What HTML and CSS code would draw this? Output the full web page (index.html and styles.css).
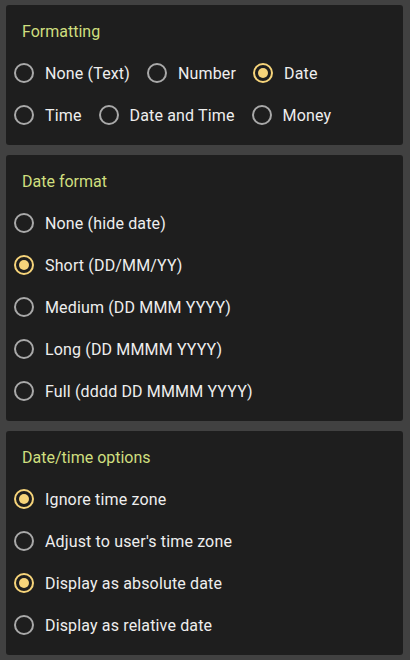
FILE: index.html
```html
<!DOCTYPE html>
<html lang="en">
<head>
    <meta charset="UTF-8">
    <meta name="viewport" content="width=device-width, initial-scale=1.0">
    <title>Date field settings</title>
    <link rel="stylesheet" href="styles.css">
</head>
<body>
    <!-- Formatting -->
    <div class="panel">
        <h2 class="panel-title">Formatting</h2>
        <div class="choice-row">
            <label class="choice"><span class="radio"></span>None (Text)</label>
            <label class="choice"><span class="radio"></span>Number</label>
            <label class="choice"><span class="radio checked"></span>Date</label>
        </div>
        <div class="choice-row">
            <label class="choice"><span class="radio"></span>Time</label>
            <label class="choice"><span class="radio"></span>Date and Time</label>
            <label class="choice"><span class="radio"></span>Money</label>
        </div>
    </div>

    <!-- Date format -->
    <div class="panel">
        <h2 class="panel-title">Date format</h2>
        <label class="choice"><span class="radio"></span>None (hide date)</label>
        <label class="choice"><span class="radio checked"></span>Short (DD/MM/YY)</label>
        <label class="choice"><span class="radio"></span>Medium (DD MMM YYYY)</label>
        <label class="choice"><span class="radio"></span>Long (DD MMMM YYYY)</label>
        <label class="choice"><span class="radio"></span>Full (dddd DD MMMM YYYY)</label>
    </div>

    <!-- Date/time options -->
    <div class="panel">
        <h2 class="panel-title">Date/time options</h2>
        <label class="choice"><span class="radio checked"></span>Ignore time zone</label>
        <label class="choice"><span class="radio"></span>Adjust to user's time zone</label>
        <label class="choice"><span class="radio checked"></span>Display as absolute date</label>
        <label class="choice"><span class="radio"></span>Display as relative date</label>
    </div>
</body>
</html>
```

FILE: styles.css
```css
/* Global */
body {
    font-family: Roboto, "Noto Sans", sans-serif;
    background-color: #414141;
    margin: 0;
    padding: 5px 7px 5px 6px;
    display: flex;
    flex-direction: column;
    gap: 10px;
    color: #eeeeee;
}

/* Panels */
.panel {
    background-color: #1e1e1e;
    border-radius: 3px;
    padding: 17px 0 9px 8px;
    display: flex;
    flex-direction: column;
}

.panel-title {
    margin: 0 0 10px 8px;
    font-size: 16px;
    font-weight: 400;
    line-height: 20px;
    color: #cfdf7f;
}

/* Radio choices */
.choice-row {
    display: flex;
    column-gap: 17px;
}

.choice {
    display: flex;
    align-items: center;
    gap: 11px;
    height: 42px;
    font-size: 16px;
    letter-spacing: 0.15px;
}

.radio {
    width: 20px;
    height: 20px;
    box-sizing: border-box;
    border: 2px solid #a9a9a9;
    border-radius: 50%;
    display: flex;
    align-items: center;
    justify-content: center;
}

.radio.checked {
    border-color: #f6d47a;
}

.radio.checked::after {
    content: "";
    width: 10px;
    height: 10px;
    border-radius: 50%;
    background-color: #f6d47a;
}
```
